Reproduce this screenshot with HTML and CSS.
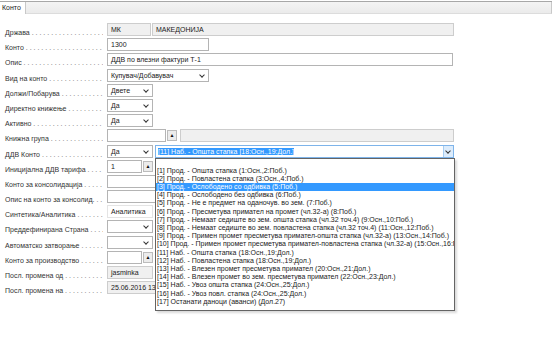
FILE: index.html
```html
<!DOCTYPE html>
<html lang="mk">
<head>
    <meta charset="UTF-8">
    <title>Конто</title>
    <link rel="stylesheet" href="styles.css">
</head>
<body>
    <div class="tabs">
        <div class="tab">Конто</div>
        <div class="tab-fill"></div>
    </div>

    <div class="form">
        <div class="label">Држава</div>
        <div class="fields">
            <div class="field ro w43">МК</div>
            <div class="field ro w301">МАКЕДОНИЈА</div>
        </div>

        <div class="label">Конто</div>
        <div class="fields"><div class="field w101">1300</div></div>

        <div class="label">Опис</div>
        <div class="fields"><div class="field w345">ДДВ по влезни фактури Т-1</div></div>

        <div class="label">Вид на конто</div>
        <div class="fields"><div class="field select w101">Купувач/Добавувач<span class="chev"></span></div></div>

        <div class="label">Должи/Побарува</div>
        <div class="fields"><div class="field select w45">Двете<span class="chev"></span></div></div>

        <div class="label">Директно книжење</div>
        <div class="fields"><div class="field select w45">Да<span class="chev"></span></div></div>

        <div class="label">Активно</div>
        <div class="fields"><div class="field select w45">Да<span class="chev"></span></div></div>

        <div class="label">Книжна група</div>
        <div class="fields">
            <div class="field w58"></div>
            <div class="spin">&#9650;</div>
            <div class="field ro w273 gap3"></div>
        </div>

        <div class="label">ДДВ Конто</div>
        <div class="fields">
            <div class="field select w45">Да<span class="chev"></span></div>
            <div class="combo">
                <span class="sel-text">[11] Наб. - Општа стапка [18:Осн.,19:Дол.]</span>
                <span class="combo-btn"><span class="chev"></span></span>
                <ul class="list">
                    <li>&nbsp;</li>
                    <li>[1] Прод. - Општа стапка (1:Осн.,2:Поб.)</li>
                    <li>[2] Прод. - Повластена стапка (3:Осн.,4:Поб.)</li>
                    <li class="active">[3] Прод. - Ослободено со одбивка (5:Поб.)</li>
                    <li>[4] Прод. - Ослободено без одбивка (6:Поб.)</li>
                    <li>[5] Прод. - Не е предмет на оданочув. во зем. (7:Поб.)</li>
                    <li>[6] Прод. - Пресметува примател на промет (чл.32-а) (8:Поб.)</li>
                    <li>[7] Прод. - Немаат седиште во зем. општа стапка (чл.32 точ.4) (9:Осн.,10:Поб.)</li>
                    <li>[8] Прод. - Немаат седиште во зем. повластена стапка (чл.32 точ.4) (11:Осн.,12:Поб.)</li>
                    <li>[9] Прод. - Примен промет пресметува примател-општа стапка (чл.32-а) (13:Осн.,14:Поб.)</li>
                    <li>[10] Прод. - Примен промет пресметува примател-повластена стапка (чл.32-а) (15:Осн.,16:Поб.)</li>
                    <li>[11] Наб. - Општа стапка (18:Осн.,19:Дол.)</li>
                    <li>[12] Наб. - Повластена стапка (18:Осн.,19:Дол.)</li>
                    <li>[13] Наб. - Влезен промет пресметува примател (20:Осн.,21:Дол.)</li>
                    <li>[14] Наб. - Влезен промет во зем. пресметува примател (22:Осн.,23:Дол.)</li>
                    <li>[15] Наб. - Увоз општа стапка (24:Осн.,25:Дол.)</li>
                    <li>[16] Наб. - Увоз повл. стапка (24:Осн.,25:Дол.)</li>
                    <li>[17] Останати даноци (аванси) (Дол.27)</li>
                </ul>
            </div>
        </div>

        <div class="label">Иницијална ДДВ тарифа</div>
        <div class="fields">
            <div class="field w35">1</div>
            <div class="spin">&#9650;</div>
        </div>

        <div class="label">Конто за консолидација</div>
        <div class="fields"><div class="field w58"></div></div>

        <div class="label">Опис на конто за консолид.</div>
        <div class="fields"><div class="field w58"></div></div>

        <div class="label">Синтетика/Аналитика</div>
        <div class="fields"><div class="field flat w45">Аналитика</div></div>

        <div class="label">Преддефинирана Страна</div>
        <div class="fields"><div class="field select w45"><span class="chev"></span></div></div>

        <div class="label">Автоматско затворање</div>
        <div class="fields"><div class="field select w45"><span class="chev"></span></div></div>

        <div class="label">Конто за производство</div>
        <div class="fields">
            <div class="field w35"></div>
            <div class="spin">&#9650;</div>
        </div>

        <div class="label">Посл. промена од</div>
        <div class="fields"><div class="field ro w45">jasminka</div></div>

        <div class="label">Посл. промена на</div>
        <div class="fields"><div class="field ro w58">25.06.2016 13:42</div></div>
    </div>
</body>
</html>
```

FILE: styles.css
```css
:root {
    --border: #b4b4b4;
    --ro-bg: #f0f0f0;
    --hl: #3399ff;
}

html,
body {
    min-height: 100vh;
}

body {
    margin: 0;
    font-family: 'Liberation Sans', Arial, sans-serif;
    font-size: 7px;
    color: #1a1a1a;
    background: #fff;
}

/* tab strip */
.tabs {
    display: flex;
    height: 12px;
    margin: 1px 2px 0 0;
    border-top: 1px solid #a8a8a8;
}

.tab {
    padding: 2px 4px 0 2px;
    background: #fff;
    border-right: 1px solid #c8c8c8;
}

.tab-fill {
    flex: 1;
    background: linear-gradient(#f4f4f4, #ebebeb);
    border-bottom: 1px solid #dcdcdc;
    border-right: 1px solid #c8c8c8;
}

/* form grid */
.form {
    display: grid;
    grid-template-columns: 107px 1fr;
    grid-auto-rows: 15.2px;
    padding-top: 9px;
}

.label {
    padding: 6px 0 0 5px;
    white-space: nowrap;
    overflow: hidden;
    width: 98px;
    color: #333;
}

.label::after {
    content: " . . . . . . . . . . . . . . . . . . . . . . . . . . . . . . . . . . . . . .";
    color: #666;
}

.fields {
    display: flex;
    align-items: flex-start;
    gap: 1px;
}

.field {
    position: relative;
    box-sizing: border-box;
    height: 13px;
    padding: 2px 3px 0;
    border: 1px solid var(--border);
    background: #fff;
    white-space: nowrap;
    overflow: hidden;
}

.field.ro {
    background: var(--ro-bg);
    border-color: #cdcdcd;
}

.field.flat {
    border-color: #e4e4e4;
}

.gap3 { margin-left: 2px; }

.w35 { width: 35px; }
.w43 { width: 44px; }
.w45 { width: 46px; }
.w58 { width: 59px; }
.w101 { width: 102px; }
.w273 { width: 274px; }
.w301 { width: 302px; }
.w345 { width: 346px; }

.chev {
    position: absolute;
    right: 4px;
    top: 3px;
    width: 3px;
    height: 3px;
    border-right: 1px solid #333;
    border-bottom: 1px solid #333;
    transform: rotate(45deg);
}

.spin {
    box-sizing: border-box;
    width: 10px;
    height: 11px;
    margin-top: 1px;
    border: 1px solid #bcbcbc;
    background: #ececec;
    font-size: 5px;
    line-height: 9px;
    text-align: center;
    color: #111;
}

/* open dropdown */
.combo {
    position: relative;
    box-sizing: border-box;
    width: 299px;
    height: 13px;
    margin-left: 1px;
    padding: 2px 2px 0;
    border: 1px solid #7eb4ea;
    background: #fff;
}

.sel-text {
    background: var(--hl);
    color: #fff;
}

.combo-btn {
    position: absolute;
    right: 0;
    top: 0;
    width: 9px;
    height: 11px;
    background: #dcecfc;
    border-left: 1px solid #a6cdf2;
}

.combo-btn .chev {
    right: 3px;
    top: 3px;
}

.list {
    position: absolute;
    left: -1px;
    top: 12px;
    z-index: 2;
    box-sizing: border-box;
    width: 300px;
    margin: 0;
    padding: 0 0 4px;
    list-style: none;
    background: #fff;
    border: 1px solid #646464;
    box-shadow: 2px 2px 2px rgba(0, 0, 0, 0.15);
    overflow: hidden;
}

.list li {
    display: block;
    height: 8.2px;
    line-height: 8.2px;
    padding-left: 1px;
    white-space: nowrap;
}

.list li.active {
    background: var(--hl);
    color: #fff;
}
```
